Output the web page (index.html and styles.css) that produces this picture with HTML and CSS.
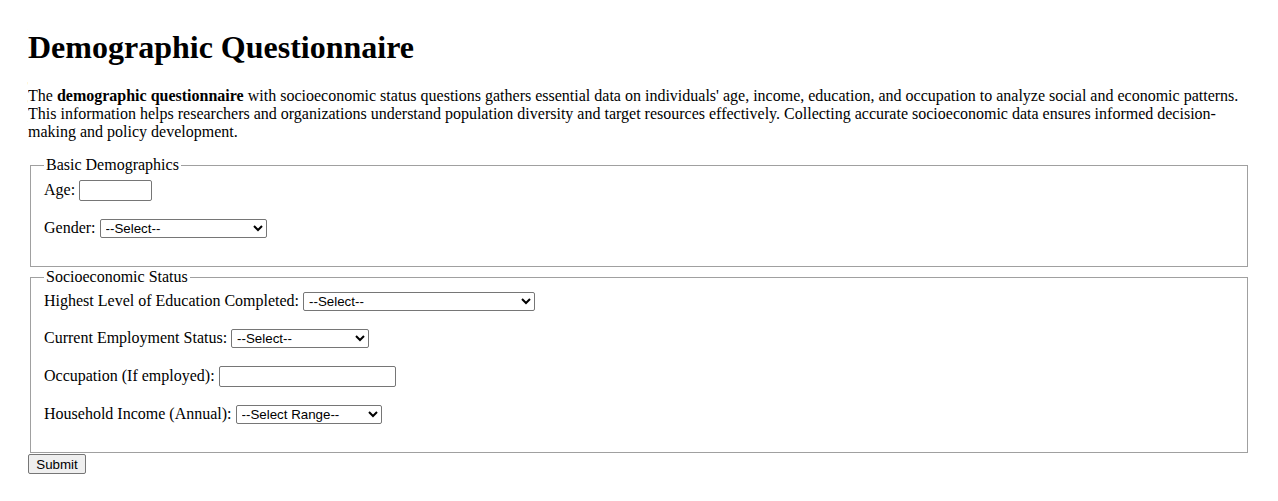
FILE: index.html
```html
<!DOCTYPE html>
<html lang="en">
<head>
<meta charset="utf-8">
<title>Demographic Questionnaire</title>
<link rel="stylesheet" href="styles.css">
</head>
<body>
<h1 class="title">Demographic Questionnaire</h1>
<p class="intro">The <strong>demographic questionnaire</strong> with socioeconomic status questions gathers essential data on individuals' age, income, education, and occupation to analyze social and economic patterns. This information helps researchers and organizations understand population diversity and target resources effectively. Collecting accurate socioeconomic data ensures informed decision-making and policy development.</p>
<form class="form">
  <fieldset class="group">
    <legend class="legend">Basic Demographics</legend>
    <div class="row">
      <label class="label" for="age">Age:</label>
      <input class="field field-age" type="text" id="age">
    </div>
    <div class="row">
      <label class="label" for="gender">Gender:</label>
      <select class="choice choice-gender" id="gender"><option>--Select--</option></select>
    </div>
  </fieldset>
  <fieldset class="group">
    <legend class="legend">Socioeconomic Status</legend>
    <div class="row">
      <label class="label" for="edu">Highest Level of Education Completed:</label>
      <select class="choice choice-edu" id="edu"><option>--Select--</option></select>
    </div>
    <div class="row">
      <label class="label" for="emp">Current Employment Status:</label>
      <select class="choice choice-emp" id="emp"><option>--Select--</option></select>
    </div>
    <div class="row">
      <label class="label" for="occ">Occupation (If employed):</label>
      <input class="field field-occ" type="text" id="occ">
    </div>
    <div class="row">
      <label class="label" for="inc">Household Income (Annual):</label>
      <select class="choice choice-inc" id="inc"><option>--Select Range--</option></select>
    </div>
  </fieldset>
  <button class="submit" type="submit">Submit</button>
</form>
</body>
</html>
```
FILE: styles.css
```css
html, body {
  background: #ffffff;
}
body {
  margin: 8px 28px;
  font-family: "Liberation Serif", "Times New Roman", serif;
  font-size: 16px;
  color: #000000;
}
.title {
  font-size: 32px;
  font-weight: bold;
  margin: 21px 0 21px;
}
.intro {
  margin: 16px 0 15px;
  line-height: 18px;
}
.form {
  margin: 0;
}
.group {
  margin: 0 2px 1px;
  padding: 0 13px 10px;
  border: 1px solid #a0a0a0;
}
.legend {
  padding: 0 2px;
  line-height: 18px;
}
.row {
  margin-top: 6px;
  margin-bottom: 18px;
  line-height: 18px;
}
.label {
  vertical-align: baseline;
}
.field {
  box-sizing: border-box;
  height: 21px;
  border: 1px solid #767676;
  border-radius: 2px;
  padding: 1px 2px;
  font-family: "Liberation Sans", Arial, sans-serif;
  font-size: 13.33px;
  vertical-align: baseline;
}
.field-age { width: 73px; }
.field-occ { width: 177px; }
.choice {
  box-sizing: border-box;
  height: 19px;
  border: 1px solid #767676;
  border-radius: 2px;
  background: #ffffff;
  font-family: "Liberation Sans", Arial, sans-serif;
  font-size: 13.33px;
  padding: 0 0 0 1px;
  color: #000;
}
.choice-gender { width: 167px; }
.choice-edu { width: 232px; }
.choice-emp { width: 138px; }
.choice-inc { width: 146px; }
.submit {
  box-sizing: border-box;
  height: 20px;
  width: 58px;
  margin: 0;
  padding: 1px 6px;
  border: 1px solid #767676;
  border-radius: 2px;
  background: #efefef;
  font-family: "Liberation Sans", Arial, sans-serif;
  font-size: 13.33px;
  color: #000;
}
```
